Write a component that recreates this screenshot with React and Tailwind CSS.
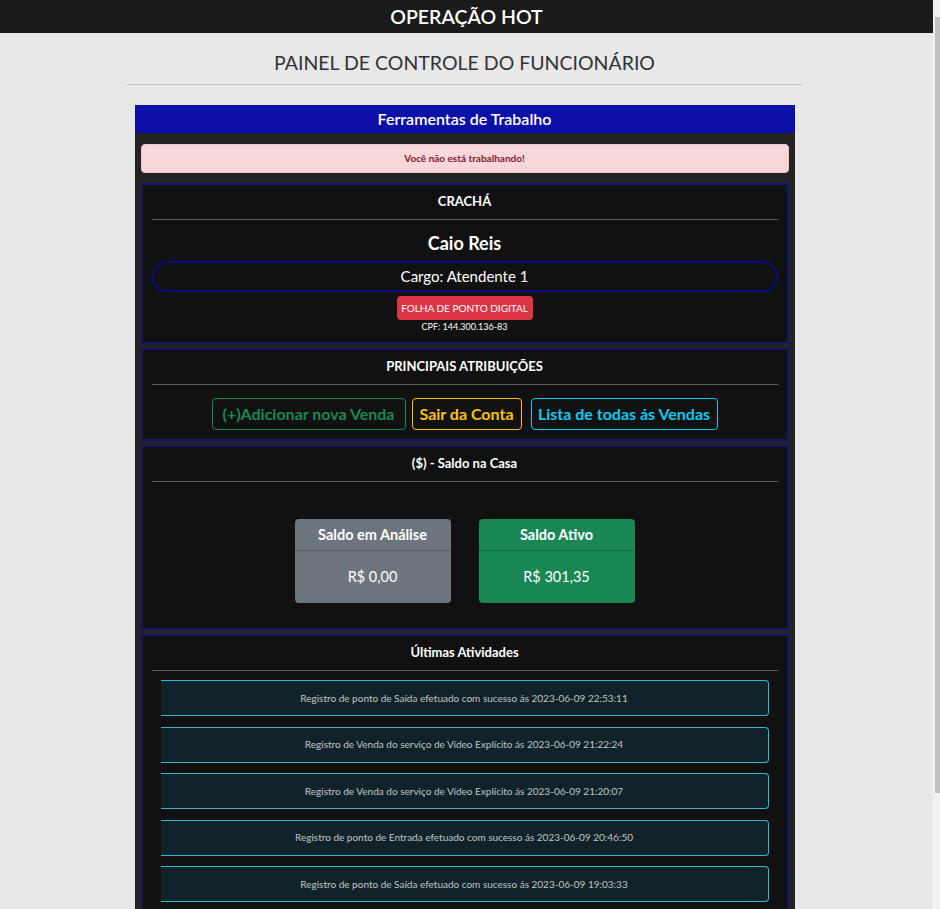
import React from "react";

const activities = [
  "Registro de ponto de Saída efetuado com sucesso ás 2023-06-09 22:53:11",
  "Registro de Venda do serviço de Vídeo Explícito ás 2023-06-09 21:22:24",
  "Registro de Venda do serviço de Vídeo Explícito ás 2023-06-09 21:20:07",
  "Registro de ponto de Entrada efetuado com sucesso ás 2023-06-09 20:46:50",
  "Registro de ponto de Saída efetuado com sucesso ás 2023-06-09 19:03:33",
];

function Card({ title, children, className = "" }) {
  return (
    <div className={"border-2 border-[#15156e] bg-[#111111] px-[9px] pt-[5px] " + className}>
      <div className="h-[22px] text-center text-[13px] font-bold leading-[22px] text-white">{title}</div>
      <div className="mt-[7px] h-px bg-[#5c5c5c]" />
      {children}
    </div>
  );
}

export default function App() {
  return (
    <div
      className="flex h-[909px] w-full overflow-hidden bg-[#e8e8e8]"
      style={{ fontFamily: "Lato, 'Noto Sans', sans-serif" }}
    >
      <div className="flex w-[933px] flex-col">
        <div className="flex h-[33px] shrink-0 items-center justify-center bg-[#1b1b1b]">
          <h1 className="text-[19.5px] font-semibold text-white">OPERAÇÃO HOT</h1>
        </div>
        <div className="shrink-0 pr-[4px]">
          <div className="mx-auto w-[675px]">
            <h2 className="mt-[17px] h-[26px] text-center text-[19.5px] leading-[26px] text-[#333333]">
              PAINEL DE CONTROLE DO FUNCIONÁRIO
            </h2>
            <div className="mt-[8px] h-px bg-[#c2c2c2]" />
            <div className="mx-auto mt-[20px] w-[660px] bg-[#232323]">
              <div className="flex h-[28px] items-center justify-center bg-[#0d0fa9] text-[16px] font-semibold text-white">
                Ferramentas de Trabalho
              </div>
              <div className="px-[6px] pt-[11px]">
                <div className="flex h-[29px] items-center justify-center rounded-[4px] border border-[#f5c2c7] bg-[#f8d7da] text-[10px] font-bold text-[#842029]">
                  Você não está trabalhando!
                </div>

                <Card title="CRACHÁ" className="mt-[10px] pb-[9px]">
                  <div className="mt-[11px] h-[24px] text-center text-[18px] font-bold leading-[24px] text-white">
                    Caio Reis
                  </div>
                  <div className="mt-[6px] flex h-[31px] items-center justify-center rounded-full border-2 border-[#0b0b7e] text-[15px] text-white">
                    Cargo: Atendente 1
                  </div>
                  <div className="mt-[4px] flex justify-center">
                    <div className="flex h-[24px] w-[136px] items-center justify-center rounded-[4px] bg-[#dc3545] text-[10px] text-white">
                      FOLHA DE PONTO DIGITAL
                    </div>
                  </div>
                  <div className="mt-[1px] h-[12px] text-center text-[9px] leading-[12px] text-white">
                    CPF: 144.300.136-83
                  </div>
                </Card>

                <Card title="PRINCIPAIS ATRIBUIÇÕES" className="mt-[4px] pb-[9px]">
                  <div className="mt-[13px] flex justify-center gap-[6px] text-[16px] font-bold">
                    <div className="flex h-[32px] w-[194px] items-center justify-center rounded-[4px] border border-[#198754] text-[#198754]">
                      (+)Adicionar nova Venda
                    </div>
                    <div className="flex h-[32px] w-[110px] items-center justify-center rounded-[4px] border border-[#ffc107] text-[#ffc107]">
                      Sair da Conta
                    </div>
                    <div className="ml-[3px] flex h-[32px] w-[187px] items-center justify-center rounded-[4px] border border-[#0dcaf0] text-[#0dcaf0]">
                      Lista de todas ás Vendas
                    </div>
                  </div>
                </Card>

                <Card title="($) - Saldo na Casa" className="mt-[4px] pb-[25px]">
                  <div className="mt-[37px] flex justify-center gap-[28px]">
                    <div className="w-[156px] overflow-hidden rounded-[4px] bg-[#6c757d] text-white">
                      <div className="flex h-[32px] items-center justify-center border-b border-black/20 text-[14.5px] font-bold">
                        Saldo em Análise
                      </div>
                      <div className="flex h-[52px] items-center justify-center text-[14.5px]">R$ 0,00</div>
                    </div>
                    <div className="w-[156px] overflow-hidden rounded-[4px] bg-[#198754] text-white">
                      <div className="flex h-[32px] items-center justify-center border-b border-black/20 text-[14.5px] font-bold">
                        Saldo Ativo
                      </div>
                      <div className="flex h-[52px] items-center justify-center text-[14.5px]">R$ 301,35</div>
                    </div>
                  </div>
                </Card>

                <Card title="Últimas Atividades" className="mt-[4px] pb-[20px]">
                  <div className="mt-[9px] flex flex-col gap-[10.5px] pl-[9px] pr-[9px]">
                    {activities.map((a, i) => (
                      <div
                        key={i}
                        className="flex h-[36px] items-center justify-center rounded-r-[4px] border border-l-0 border-[#36b8cc] bg-[#10232a] text-[10px] text-[#c4c4c4]"
                      >
                        {a}
                      </div>
                    ))}
                  </div>
                </Card>
              </div>
            </div>
          </div>
        </div>
      </div>
      <div className="flex w-[7px] flex-col bg-[#f1f1f1]">
        <div className="mt-[17px] ml-[2px] h-[776px] w-[5px] bg-[#c1c1c1]" />
      </div>
    </div>
  );
}
